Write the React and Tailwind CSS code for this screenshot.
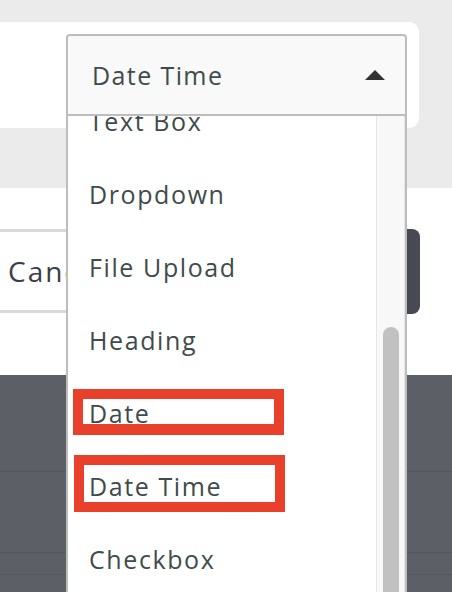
import React from "react";

const items = ["Text Box", "Dropdown", "File Upload", "Heading", "Date", "Date Time", "Checkbox"];

export default function App() {
  return (
    <div
      className="relative w-[452px] h-[592px] overflow-hidden bg-white"
      style={{ fontFamily: '"Open Sans", "Liberation Sans", sans-serif' }}
    >
      {/* top gray band with card */}
      <div className="h-[188px] bg-[#eaebea] pt-[22px]">
        <div className="w-[419px] h-[106px] bg-white rounded-r-[10px]" />
      </div>

      {/* white area with buttons */}
      <div className="h-[187px] bg-white pt-[41px]">
        <div className="flex items-stretch">
          <button className="w-[300px] h-[84px] border-y-[3px] border-[#d9d9d9] bg-white pl-[8px] text-left text-[28px] tracking-[2px] text-[#3b3d46]">
            Cancel
          </button>
          <div className="w-[95px]" />
          <button className="w-[25px] h-[85px] rounded-r-[8px] bg-[#474a52]" />
        </div>
      </div>

      {/* dark table area */}
      <div className="h-[217px] bg-[#5d5f67] flex flex-col">
        <div className="h-[97px] border-b border-[#55575f]" />
        <div className="h-[81px] border-b border-[#55575f]" />
        <div className="h-[22px] border-b border-[#55575f]" />
      </div>

      {/* dropdown overlay */}
      <div className="absolute left-[66px] top-[34px] w-[341px] flex flex-col">
        <div className="h-[82px] bg-[#f9f9f9] border-2 border-[#bdbdbd] rounded-t-[4px] flex items-center justify-between pl-[24px] pr-[20px]">
          <span className="text-[25px] leading-none text-[#3f4b4b] tracking-[1.4px]">Date Time</span>
          <svg width="20" height="10" viewBox="0 0 20 10">
            <polygon points="10,0 20,10 0,10" fill="#333333" />
          </svg>
        </div>
        <div className="h-[480px] bg-white border-x-2 border-[#bdbdbd] flex overflow-hidden">
          <div className="flex-1 overflow-hidden">
            <div className="mt-[-31px] flex flex-col">
              {items.map((t) => (
                <div
                  key={t}
                  className="h-[73px] shrink-0 flex items-center pl-[21px] text-[25px] leading-none text-[#3f4b4b] tracking-[1.6px]"
                >
                  {t}
                </div>
              ))}
            </div>
          </div>
          <div className="w-[29px] bg-[#f8f8f8] border-l border-r border-[#e6e6e6] flex justify-center pt-[211px]">
            <div className="w-[16px] h-[400px] bg-[#c1c1c1] rounded-t-[8px]" />
          </div>
        </div>
      </div>

      {/* red annotation boxes */}
      <div className="absolute left-[73px] top-[389px] w-[211px] h-[46px] border-[10px] border-b-[11px] border-[#e8402b]" />
      <div className="absolute left-[74px] top-[455px] w-[211px] h-[57px] border-[10px] border-[#e8402b]" />
    </div>
  );
}
